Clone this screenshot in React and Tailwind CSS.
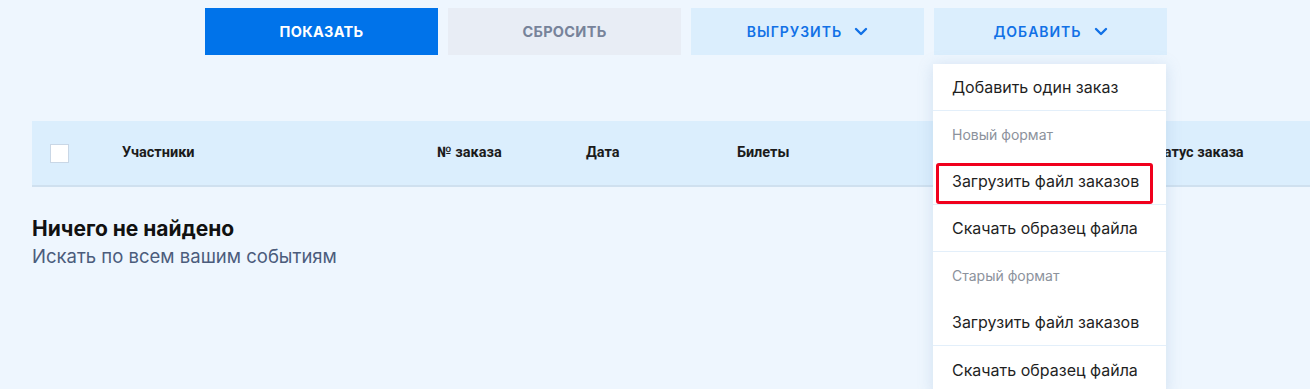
import React from "react";

const Chevron = () => (
  <svg width="14" height="9" viewBox="0 0 14 9" fill="none" className="ml-[12px]">
    <path d="M2 2l5 5 5-5" stroke="currentColor" strokeWidth="2.4" strokeLinecap="round" strokeLinejoin="round" />
  </svg>
);

const menu = [
  { label: "Добавить один заказ", border: true },
  { label: "Новый формат", muted: true },
  { label: "Загрузить файл заказов", border: true, marked: true },
  { label: "Скачать образец файла", border: true },
  { label: "Старый формат", muted: true },
  { label: "Загрузить файл заказов", border: true },
  { label: "Скачать образец файла" },
];

const App = () => {
  return (
    <div className="relative h-[389px] w-[1310px] overflow-hidden bg-[#eef6fe] font-['Inter',sans-serif]">
      <div className="flex gap-[10px] pl-[205px] pt-[8px]">
        <button className="flex h-[47px] w-[233px] items-center justify-center bg-[#0073ea] text-[14.5px] font-bold tracking-[0.02em] text-white">
          ПОКАЗАТЬ
        </button>
        <button className="flex h-[47px] w-[233px] items-center justify-center bg-[#e8edf5] text-[14.5px] font-bold tracking-[0.02em] text-[#77839a]">
          СБРОСИТЬ
        </button>
        <button className="flex h-[47px] w-[233px] items-center justify-center bg-[#dbeefd] text-[14px] font-semibold tracking-[0.07em] text-[#1271e6]">
          ВЫГРУЗИТЬ
          <Chevron />
        </button>
        <button className="flex h-[47px] w-[233px] items-center justify-center bg-[#dbeefd] text-[14px] font-semibold tracking-[0.07em] text-[#1271e6]">
          ДОБАВИТЬ
          <Chevron />
        </button>
      </div>

      <div className="ml-[32px] mt-[66px] flex h-[66px] items-center border-b-2 border-[#cfe0ef] bg-[#dbeefd] font-['Roboto',sans-serif] text-[14.5px] font-bold text-[#1b1b1b]">
        <div className="ml-[18px] mr-[53px] h-[19px] w-[19px] border border-[#c9d7e6] bg-white" />
        <div className="w-[315px]">Участники</div>
        <div className="w-[149px]">№ заказа</div>
        <div className="w-[151px]">Дата</div>
        <div className="w-[410px]">Билеты</div>
        <div>Статус заказа</div>
      </div>

      <div className="pl-[32px] pt-[28px]">
        <div className="text-[21px] font-bold leading-[28px] text-[#111]">Ничего не найдено</div>
        <div className="text-[18.5px] leading-[27px] text-[#4b5c7c]">Искать по всем вашим событиям</div>
      </div>

      <div className="absolute left-[933px] top-[64px] w-[233px] bg-white shadow-[0_2px_14px_rgba(120,160,200,0.25)]">
        {menu.map((item, i) => (
          <div
            key={i}
            className={`relative flex h-[47px] items-center pl-[19px] ${
              item.muted ? "text-[14px] text-[#8c929c]" : "text-[16px] text-[#1f1f1f]"
            } ${item.border ? "border-b border-[#e3effa]" : ""}`}
          >
            {item.label}
            {item.marked && (
              <div className="absolute left-[3px] right-[13px] top-[5px] bottom-[0px] rounded-[3px] border-[3px] border-[#f0001c]" />
            )}
          </div>
        ))}
      </div>
    </div>
  );
};

export default App;
